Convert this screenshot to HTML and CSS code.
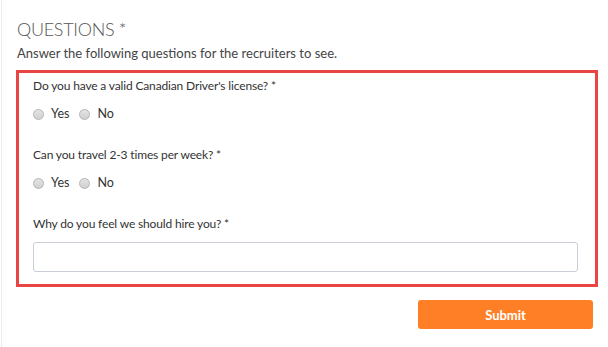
FILE: index.html
```html
<!DOCTYPE html>
<html lang="en">
<head>
  <meta charset="UTF-8">
  <meta name="viewport" content="width=device-width, initial-scale=1.0">
  <title>Questions</title>
  <link rel="stylesheet" href="styles.css">
</head>
<body>
  <div class="page">
    <h2 class="section-title">QUESTIONS *</h2>
    <p class="section-help">Answer the following questions for the recruiters to see.</p>

    <div class="questions-box">
      <div class="question">
        <div class="question-label">Do you have a valid Canadian Driver's license? *</div>
        <div class="radio-row">
          <label class="radio"><input type="radio" name="q1"><span class="dot"></span>Yes</label>
          <label class="radio"><input type="radio" name="q1"><span class="dot"></span>No</label>
        </div>
      </div>

      <div class="question">
        <div class="question-label">Can you travel 2-3 times per week? *</div>
        <div class="radio-row">
          <label class="radio"><input type="radio" name="q2"><span class="dot"></span>Yes</label>
          <label class="radio"><input type="radio" name="q2"><span class="dot"></span>No</label>
        </div>
      </div>

      <div class="question last">
        <div class="question-label">Why do you feel we should hire you? *</div>
        <input class="text-input" type="text">
      </div>
    </div>

    <div class="actions">
      <button class="submit-btn" type="button">Submit</button>
    </div>
  </div>
</body>
</html>
```

FILE: styles.css
```css
body {
  margin: 0;
  background: #fff;
  font-family: Lato, "Liberation Sans", sans-serif;
  color: #3a3a3a;
}

.page {
  margin-left: 1px;
  border-left: 1px solid #ececec;
  height: 347px;
  padding: 17px 0 0 14px;
  box-sizing: border-box;
}

.section-title {
  margin: 0 0 0 1px;
  font-size: 18px;
  font-weight: 300;
  color: #555;
  line-height: 24px;
  letter-spacing: -0.3px;
}

.section-help {
  margin: 3px 0 0 1px;
  font-size: 13px;
  line-height: 18px;
  color: #444;
}

.questions-box {
  margin-top: 8px;
  width: 582px;
  box-sizing: border-box;
  border: 3px solid #ea4545;
  padding: 4px 18px 12px 14px;
}

.question {
  margin-bottom: 23px;
}

.question.last {
  margin-bottom: 0;
}

.question-label {
  font-size: 12px;
  line-height: 18px;
  letter-spacing: -0.15px;
  color: #333;
}

.radio-row {
  display: flex;
  gap: 10px;
  margin-top: 10px;
}

.radio {
  display: flex;
  align-items: center;
  font-size: 12.5px;
  line-height: 18px;
  color: #333;
}

.radio input {
  display: none;
}

.dot {
  width: 9px;
  height: 9px;
  border-radius: 50%;
  border: 1px solid #b5b5b5;
  background: linear-gradient(#e4e4e4, #d0d0d0);
  margin-right: 7px;
}

.text-input {
  display: block;
  margin-top: 9px;
  width: 545px;
  height: 30px;
  box-sizing: border-box;
  border: 1px solid #c9ced8;
  border-radius: 3px;
  background: #fff;
}

.actions {
  width: 577px;
  display: flex;
  justify-content: flex-end;
  margin-top: 13px;
}

.submit-btn {
  width: 175px;
  height: 29px;
  border: none;
  border-radius: 3px;
  background: #ff7f27;
  color: #fff;
  font-family: Lato, "Liberation Sans", sans-serif;
  font-weight: 700;
  font-size: 13px;
}
```
